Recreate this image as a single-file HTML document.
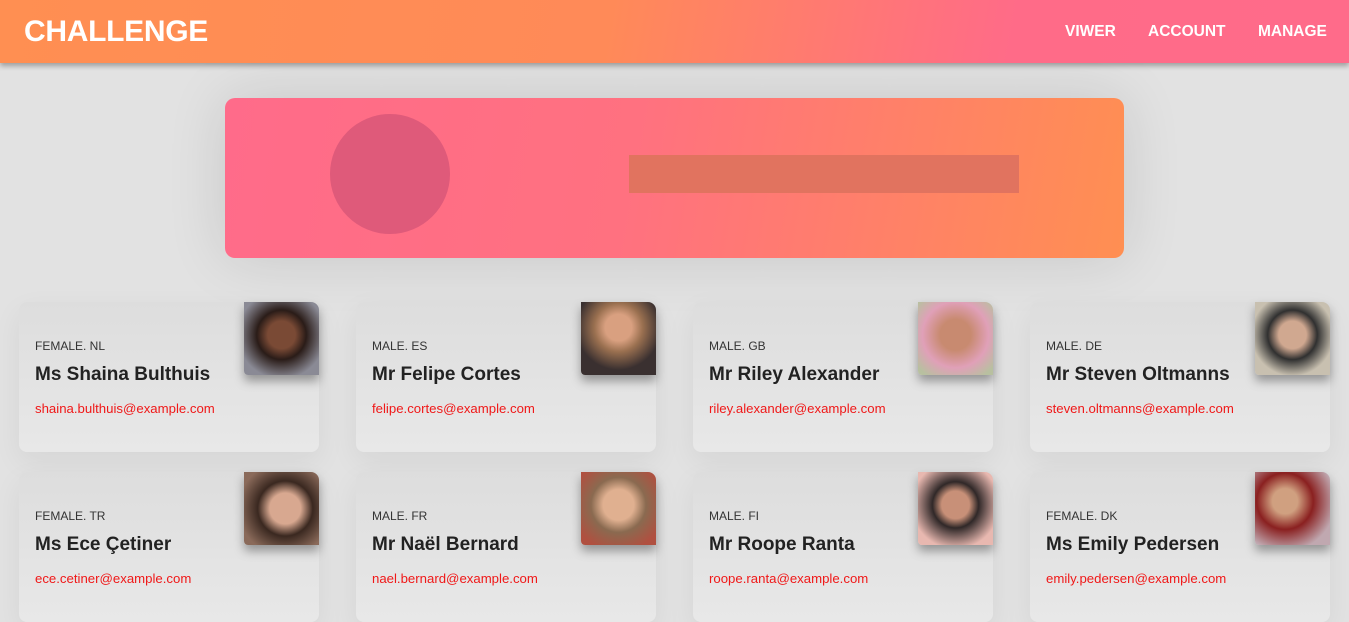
<!DOCTYPE html>
<html><head><style>
*{margin:0;padding:0;box-sizing:border-box}
body{width:1349px;height:622px;overflow:hidden;background:#e2e2e2;font-family:"Liberation Sans",sans-serif;position:relative}
.hdr{position:absolute;left:0;top:0;width:1349px;height:63px;background:linear-gradient(100deg,#ff8f52 0%,#ff8a58 45%,#ff6b88 75%,#ff6b8a 100%);box-shadow:0 3px 5px rgba(0,0,0,.3);z-index:2}
.hdr h1{position:absolute;left:24px;top:15px;color:#fff;font-size:30px;font-weight:bold;letter-spacing:-.3px}
.nav{position:absolute;top:23px;color:#fff;font-size:15.5px;font-weight:bold}
.ban{position:absolute;left:225px;top:98px;width:899px;height:160px;border-radius:10px;background:linear-gradient(100deg,#ff6b8a 0%,#ff7180 45%,#ff8f52 100%);box-shadow:0 0 60px rgba(0,0,0,.12)}
.circ{position:absolute;left:105px;top:16px;width:120px;height:120px;border-radius:50%;background:#df5a7a}
.bar{position:absolute;left:404px;top:57px;width:390px;height:38px;background:#e1735f}
.card{position:absolute;width:300px;height:150px;border-radius:8px;background:linear-gradient(180deg,#dddddd,#e8e8e8);box-shadow:0 10px 30px rgba(0,0,0,.06)}
.card .g{position:absolute;left:16px;top:37px;font-size:12px;color:#333}
.card .n{position:absolute;left:16px;top:62px;font-size:19px;font-weight:bold;color:#222}
.card .e{position:absolute;left:16px;top:99px;font-size:13.2px;color:#f01818}
.card .p{position:absolute;right:0;top:0;width:75px;height:73px;border-radius:0 8px 0 4px;box-shadow:0 6px 10px rgba(0,0,0,.35)}
</style></head><body>
<div class="hdr"><h1>CHALLENGE</h1>
<span class="nav" style="left:1065px">VIWER</span><span class="nav" style="left:1148px">ACCOUNT</span><span class="nav" style="left:1258px">MANAGE</span></div>
<div class="ban"><div class="circ"></div><div class="bar"></div></div>

<div class="card" style="left:19px;top:302px"><div class="g">FEMALE. NL</div><div class="n">Ms Shaina Bulthuis</div><div class="e">shaina.bulthuis@example.com</div><div class="p" style="background:radial-gradient(circle at 50% 45%,#7a4a35 25%,#2a1c18 45%,#8a8a95 80%)"></div></div>
<div class="card" style="left:356px;top:302px"><div class="g">MALE. ES</div><div class="n">Mr Felipe Cortes</div><div class="e">felipe.cortes@example.com</div><div class="p" style="background:radial-gradient(circle at 50% 35%,#d9a080 22%,#9a7050 40%,#3a3030 70%)"></div></div>
<div class="card" style="left:693px;top:302px"><div class="g">MALE. GB</div><div class="n">Mr Riley Alexander</div><div class="e">riley.alexander@example.com</div><div class="p" style="background:radial-gradient(circle at 50% 45%,#c88a70 28%,#e0a0b8 60%,#b8c0a0 90%)"></div></div>
<div class="card" style="left:1030px;top:302px"><div class="g">MALE. DE</div><div class="n">Mr Steven Oltmanns</div><div class="e">steven.oltmanns@example.com</div><div class="p" style="background:radial-gradient(circle at 50% 45%,#d0a890 25%,#303030 45%,#c8c0b0 75%)"></div></div>

<div class="card" style="left:19px;top:472px"><div class="g">FEMALE. TR</div><div class="n">Ms Ece Çetiner</div><div class="e">ece.cetiner@example.com</div><div class="p" style="background:radial-gradient(circle at 55% 50%,#d8a890 28%,#3a2820 50%,#8a6a5a 85%)"></div></div>
<div class="card" style="left:356px;top:472px"><div class="g">MALE. FR</div><div class="n">Mr Naël Bernard</div><div class="e">nael.bernard@example.com</div><div class="p" style="background:radial-gradient(circle at 50% 45%,#e0b090 28%,#8a6a50 50%,#b05040 85%)"></div></div>
<div class="card" style="left:693px;top:472px"><div class="g">MALE. FI</div><div class="n">Mr Roope Ranta</div><div class="e">roope.ranta@example.com</div><div class="p" style="background:radial-gradient(circle at 50% 45%,#c89078 25%,#302828 42%,#e8b8b0 80%)"></div></div>
<div class="card" style="left:1030px;top:472px"><div class="g">FEMALE. DK</div><div class="n">Ms Emily Pedersen</div><div class="e">emily.pedersen@example.com</div><div class="p" style="background:radial-gradient(circle at 40% 40%,#d0a080 20%,#8a2020 45%,#c0a8b0 80%)"></div></div>
</body></html>
